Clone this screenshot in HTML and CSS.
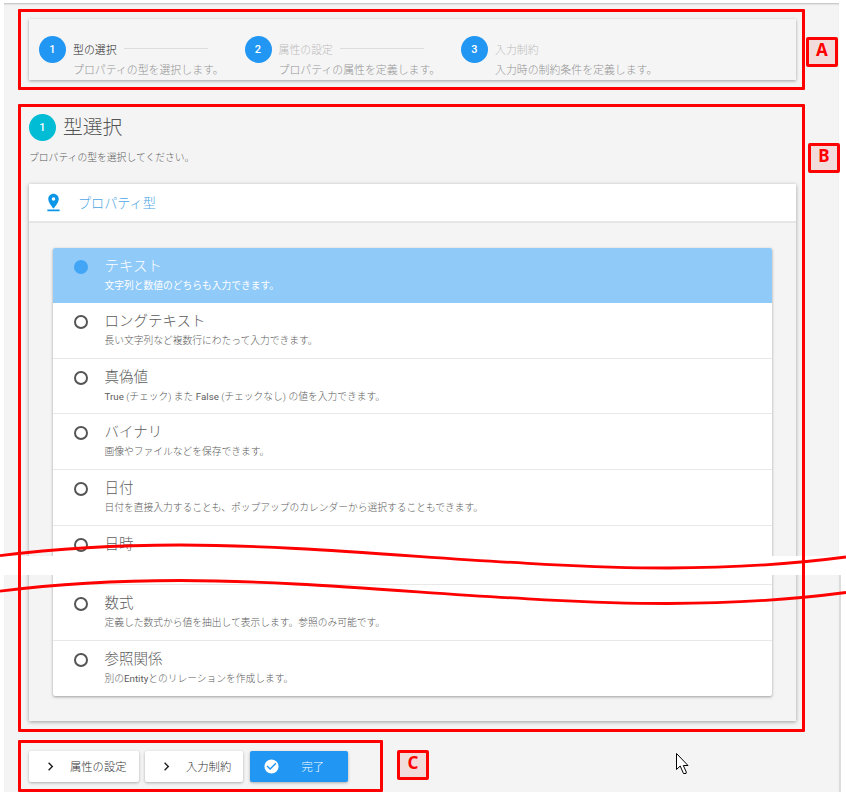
FILE: index.html
```
<!DOCTYPE html>
<html lang="ja">
<head>
<meta charset="utf-8">
<title>型選択</title>
<link rel="stylesheet" href="styles.css">
</head>
<body>
<main class="page">
  <section class="frame frame-steps">
    <span class="tag tag-a">A</span>
    <ol class="stepper">
      <li class="step active"><span class="num">1</span><div><div class="step-title">型の選択<i class="line"></i></div><div class="step-desc">プロパティの型を選択します。</div></div></li>
      <li class="step"><span class="num">2</span><div><div class="step-title">属性の設定<i class="line"></i></div><div class="step-desc">プロパティの属性を定義します。</div></div></li>
      <li class="step"><span class="num">3</span><div><div class="step-title">入力制約</div><div class="step-desc">入力時の制約条件を定義します。</div></div></li>
    </ol>
  </section>

  <section class="frame frame-main">
    <span class="tag tag-b">B</span>
    <h1 class="heading"><span class="num cyan">1</span><span class="heading-text">型選択</span></h1>
    <p class="lead">プロパティの型を選択してください。</p>
    <div class="card">
      <h2 class="card-head">
        <svg class="pin" viewBox="0 0 24 24"><path d="M18 8c0-3.310-2.690-6-6-6S6 4.690 6 8c0 4.500 6 11 6 11s6-6.500 6-11zm-8 0a2 2 0 1 1 4 0 2 2 0 0 1-4 0zM5 20v2h14v-2z"/></svg>
        プロパティ型
      </h2>
      <ul class="list">
        <li class="row selected"><span class="radio"></span><div><div class="name">テキスト</div><div class="desc">文字列と数値のどちらも入力できます。</div></div></li>
        <li class="row"><span class="radio"></span><div><div class="name">ロングテキスト</div><div class="desc">長い文字列など複数行にわたって入力できます。</div></div></li>
        <li class="row"><span class="radio"></span><div><div class="name">真偽値</div><div class="desc"><b>True</b> (チェック) また <b>False</b> (チェックなし) の値を入力できます。</div></div></li>
        <li class="row"><span class="radio"></span><div><div class="name">バイナリ</div><div class="desc">画像やファイルなどを保存できます。</div></div></li>
        <li class="row"><span class="radio"></span><div><div class="name">日付</div><div class="desc">日付を直接入力することも、ポップアップのカレンダーから選択することもできます。</div></div></li>
        <li class="row cut"><span class="radio"></span><div><div class="name">日時</div></div></li>
        <li class="row"><span class="radio"></span><div><div class="name">数式</div><div class="desc">定義した数式から値を抽出して表示します。参照のみ可能です。</div></div></li>
        <li class="row"><span class="radio"></span><div><div class="name">参照関係</div><div class="desc">別の<b>Entity</b>とのリレーションを作成します。</div></div></li>
      </ul>
    </div>
  </section>

  <section class="frame frame-actions">
    <span class="tag tag-c">C</span>
    <button class="btn wide"><svg viewBox="0 0 24 24"><path d="M10 6 8.590 7.410 13.170 12l-4.580 4.590L10 18l6-6z"/></svg><span>属性の設定</span></button>
    <button class="btn"><svg viewBox="0 0 24 24"><path d="M10 6 8.590 7.410 13.170 12l-4.580 4.590L10 18l6-6z"/></svg><span>入力制約</span></button>
    <button class="btn primary"><svg viewBox="0 0 24 24"><path d="M12 2a10 10 0 1 0 0 20 10 10 0 0 0 0-20zm-2 15-5-5 1.410-1.410L10 14.170l7.590-7.590L19 8z"/></svg><span>完了</span></button>
  </section>
</main>
<div class="tear"></div>
<div class="edge"></div>
<svg class="waves" viewBox="0 0 846 799">
  <path d="M0 555.700C60 548 115 545 180 545C330 545 510 568 668 568C735 568 785 565 846 557"/>
  <path d="M0 591.200C60 583.500 115 580.500 180 580.500C330 580.500 510 603.500 668 603.500C735 603.500 785 600.500 846 592.500"/>
</svg>
<svg class="cursor" viewBox="0 0 13 22"><path d="M.5 .5v16l3.700-3.500 3.300 7.500h2.500l.3-1.500-3-6.500h4.700z"/></svg>
</body>
</html>
```
FILE: styles.css
```
* { box-sizing: border-box; }
body {
  margin: 0;
  position: relative;
  height: 799px;
  overflow: hidden;
  background: #fff;
  padding: 3px 7px 0 4px;
  font-family: Roboto, "Noto Sans CJK JP", sans-serif;
  font-weight: 300;
  color: #5c5c5c;
}
ol, ul, h1, h2, p { margin: 0; padding: 0; list-style: none; font-weight: 300; }

.page {
  height: 789px;
  padding: 6px 34px 0 14px;
  background: #f4f4f4;
  box-shadow: inset 0 2px 2px -1px #bbb;
}
.frame { position: relative; padding: 10px 9px 10px 11px; }
.frame::after {
  content: "";
  position: absolute;
  inset: 0;
  border: 3px solid #f00;
  border-radius: 1px;
  z-index: 3;
  pointer-events: none;
}
.frame-steps { height: 81px; }
.frame-main { height: 628px; margin-top: 14px; padding-top: 9px; }
.frame-actions { width: 365px; height: 52px; margin-top: 8px; padding-top: 11px; display: flex; gap: 6px; }

.tag {
  position: absolute;
  width: 32px;
  height: 30px;
  border: 3px solid #f00;
  border-radius: 2px;
  background: #f2dcdb;
  color: #f00;
  font: bold 17px/20px "Noto Sans", sans-serif;
  text-align: center;
}
.tag-a { left: 788px; top: 28px; }
.tag-b { left: 790px; top: 39px; }
.tag-c { left: 379px; top: 10px; }

.stepper {
  display: flex;
  height: 61px;
  padding: 17px 0 0 10px;
  background: #f5f5f5;
  box-shadow: 0 1px 3px rgba(0,0,0,.35);
}
.step { display: flex; gap: 7px; white-space: nowrap; font-size: 10.900px; }
.step:nth-child(1) { width: 205.500px; }
.step:nth-child(2) { width: 216.500px; }
.num {
  flex: none;
  width: 27px;
  height: 27px;
  border-radius: 50%;
  background: #2196f3;
  color: #fff;
  font: 500 11px/27px Roboto, sans-serif;
  text-align: center;
}
.num.cyan { background: #00bcd4; }
.step-title { display: flex; align-items: center; height: 25px; color: #bbb; }
.active .step-title { color: #222; }
.line { width: 84px; height: 1px; margin-left: 7px; background: #ddd; }
.step-desc { line-height: 19px; color: #949494; }

.heading { display: flex; align-items: center; gap: 7px; height: 28px; font-size: 19.800px; color: #555; }
.heading-text { padding-bottom: 3px; }
.lead { margin-top: 7px; font-size: 9.800px; line-height: 20px; }
.card { height: 537px; margin-top: 16px; box-shadow: 0 1px 4px rgba(0,0,0,.36); }
.card-head {
  display: flex;
  align-items: center;
  height: 39px;
  padding-left: 14px;
  border-bottom: 2px solid #e6e6e6;
  background: #fff;
  font-size: 13.100px;
  color: #4aa5e4;
}
.pin { width: 21px; height: 21px; margin-right: 14px; fill: #0c96e8; }
.list { margin: 25px 24px 0; background: #fff; border-radius: 2px; box-shadow: 0 1px 3px rgba(0,0,0,.36); }
.row {
  display: flex;
  height: 55.600px;
  padding: 9px 0 0 20.500px;
  border-bottom: 1.500px solid #e8e8e8;
  white-space: nowrap;
}
.row:last-child { border-bottom: 0; }
.row.cut { height: 59.400px; }
.row.selected { height: 55.200px; background: #90caf9; border-color: #90caf9; color: #fff; border-radius: 2px 2px 0 0; }
.radio { width: 14px; height: 14px; margin: 3px 17px 0 0; border: 2px solid #555; border-radius: 50%; }
.selected .radio { border-color: #42a5f5; background: #42a5f5; }
.name { font-size: 14.500px; line-height: 20px; }
.desc { font-size: 9.750px; line-height: 17px; }
.desc b { font-weight: 400; }
.selected .desc { font-weight: 400; }

.btn {
  display: flex;
  align-items: center;
  width: 98px;
  height: 31px;
  padding: 0 0 0 13px;
  border: 0;
  border-radius: 2px;
  background: #fff;
  box-shadow: 0 1px 3px rgba(0,0,0,.3);
  font: 300 11.300px "Noto Sans CJK JP", sans-serif;
  color: #333;
  white-space: nowrap;
}
.btn.wide { width: 110px; }
.btn svg { width: 17px; height: 17px; margin-right: 11px; fill: #222; }
.btn span { padding-bottom: 2px; }
.btn.primary { margin-left: .5px; background: #2196f3; color: #fff; }
.btn.primary svg { margin-right: 22px; fill: #fff; }

.tear { position: absolute; left: 0; right: 0; top: 556px; height: 19px; background: #fff; z-index: 2; }
.edge { position: absolute; left: 839px; top: 575px; width: 2px; height: 217px; background: #ddd; }
.waves { position: absolute; left: 0; top: 0; width: 846px; height: 799px; z-index: 4; fill: none; stroke: #f00; stroke-width: 2.800; pointer-events: none; }
.cursor { position: absolute; left: 676px; top: 753px; width: 13px; height: 22px; fill: #fff; stroke: #000; }
```
